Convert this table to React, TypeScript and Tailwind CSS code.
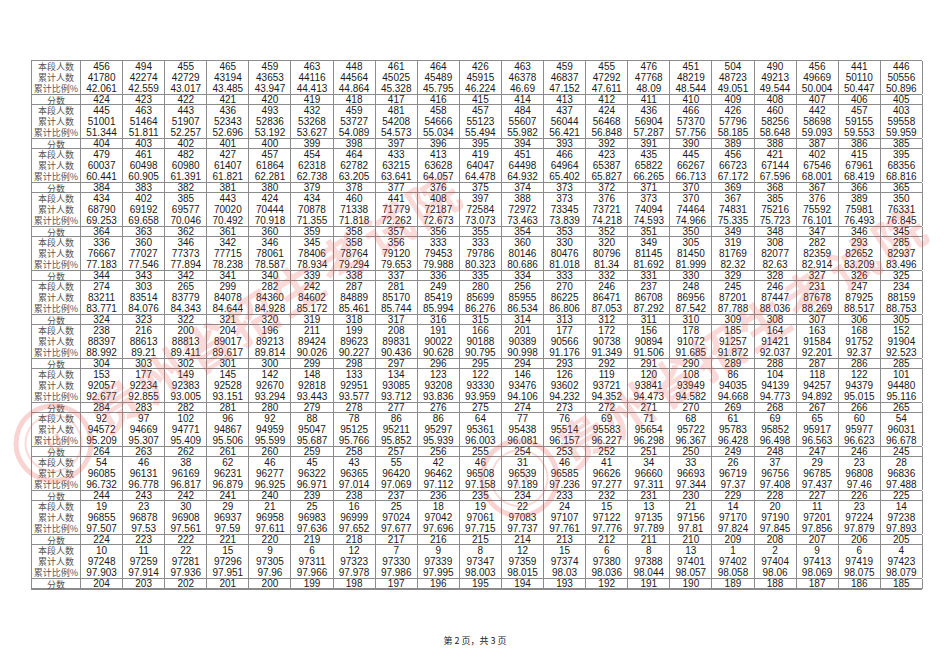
import React from 'react';

interface Group {
  counts: string;
  cums: string;
  pcts: string;
  score: number;
}

// one group = three data rows, then the score row that follows it
const groups: Group[] = [
  {
    counts: '456 494 455 465 459 463 448 461 464 426 463 459 455 476 451 504 490 456 441 446',
    cums: '41780 42274 42729 43194 43653 44116 44564 45025 45489 45915 46378 46837 47292 47768 48219 48723 49213 49669 50110 50556',
    pcts: '42.061 42.559 43.017 43.485 43.947 44.413 44.864 45.328 45.795 46.224 46.69 47.152 47.611 48.09 48.544 49.051 49.544 50.004 50.447 50.896',
    score: 424,
  },
  {
    counts: '445 463 443 436 493 432 459 481 458 457 484 437 424 436 466 426 460 442 457 403',
    cums: '51001 51464 51907 52343 52836 53268 53727 54208 54666 55123 55607 56044 56468 56904 57370 57796 58256 58698 59155 59558',
    pcts: '51.344 51.811 52.257 52.696 53.192 53.627 54.089 54.573 55.034 55.494 55.982 56.421 56.848 57.287 57.756 58.185 58.648 59.093 59.553 59.959',
    score: 404,
  },
  {
    counts: '479 461 482 427 457 454 464 433 413 419 451 466 423 435 445 456 421 402 415 395',
    cums: '60037 60498 60980 61407 61864 62318 62782 63215 63628 64047 64498 64964 65387 65822 66267 66723 67144 67546 67961 68356',
    pcts: '60.441 60.905 61.391 61.821 62.281 62.738 63.205 63.641 64.057 64.478 64.932 65.402 65.827 66.265 66.713 67.172 67.596 68.001 68.419 68.816',
    score: 384,
  },
  {
    counts: '434 402 385 443 424 434 460 441 408 397 388 373 376 373 370 367 385 376 389 350',
    cums: '68790 69192 69577 70020 70444 70878 71338 71779 72187 72584 72972 73345 73721 74094 74464 74831 75216 75592 75981 76331',
    pcts: '69.253 69.658 70.046 70.492 70.918 71.355 71.818 72.262 72.673 73.073 73.463 73.839 74.218 74.593 74.966 75.335 75.723 76.101 76.493 76.845',
    score: 364,
  },
  {
    counts: '336 360 346 342 346 345 358 356 333 333 360 330 320 349 305 319 308 282 293 285',
    cums: '76667 77027 77373 77715 78061 78406 78764 79120 79453 79786 80146 80476 80796 81145 81450 81769 82077 82359 82652 82937',
    pcts: '77.183 77.546 77.894 78.238 78.587 78.934 79.294 79.653 79.988 80.323 80.686 81.018 81.34 81.692 81.999 82.32 82.63 82.914 83.209 83.496',
    score: 344,
  },
  {
    counts: '274 303 265 299 282 242 287 281 249 280 256 270 246 237 248 245 246 231 247 234',
    cums: '83211 83514 83779 84078 84360 84602 84889 85170 85419 85699 85955 86225 86471 86708 86956 87201 87447 87678 87925 88159',
    pcts: '83.771 84.076 84.343 84.644 84.928 85.172 85.461 85.744 85.994 86.276 86.534 86.806 87.053 87.292 87.542 87.788 88.036 88.269 88.517 88.753',
    score: 324,
  },
  {
    counts: '238 216 200 204 196 211 199 208 191 166 201 177 172 156 178 185 164 163 168 152',
    cums: '88397 88613 88813 89017 89213 89424 89623 89831 90022 90188 90389 90566 90738 90894 91072 91257 91421 91584 91752 91904',
    pcts: '88.992 89.21 89.411 89.617 89.814 90.026 90.227 90.436 90.628 90.795 90.998 91.176 91.349 91.506 91.685 91.872 92.037 92.201 92.37 92.523',
    score: 304,
  },
  {
    counts: '153 177 149 145 142 148 133 134 123 122 146 126 119 120 108 86 104 118 122 101',
    cums: '92057 92234 92383 92528 92670 92818 92951 93085 93208 93330 93476 93602 93721 93841 93949 94035 94139 94257 94379 94480',
    pcts: '92.677 92.855 93.005 93.151 93.294 93.443 93.577 93.712 93.836 93.959 94.106 94.232 94.352 94.473 94.582 94.668 94.773 94.892 95.015 95.116',
    score: 284,
  },
  {
    counts: '92 97 102 96 92 88 78 86 86 64 77 76 69 71 68 61 69 65 60 54',
    cums: '94572 94669 94771 94867 94959 95047 95125 95211 95297 95361 95438 95514 95583 95654 95722 95783 95852 95917 95977 96031',
    pcts: '95.209 95.307 95.409 95.506 95.599 95.687 95.766 95.852 95.939 96.003 96.081 96.157 96.227 96.298 96.367 96.428 96.498 96.563 96.623 96.678',
    score: 264,
  },
  {
    counts: '54 46 38 62 46 45 43 55 42 46 31 46 41 34 33 26 37 29 23 28',
    cums: '96085 96131 96169 96231 96277 96322 96365 96420 96462 96508 96539 96585 96626 96660 96693 96719 96756 96785 96808 96836',
    pcts: '96.732 96.778 96.817 96.879 96.925 96.971 97.014 97.069 97.112 97.158 97.189 97.236 97.277 97.311 97.344 97.37 97.408 97.437 97.46 97.488',
    score: 244,
  },
  {
    counts: '19 23 30 29 21 25 16 25 18 19 22 24 15 13 21 14 20 11 23 14',
    cums: '96855 96878 96908 96937 96958 96983 96999 97024 97042 97061 97083 97107 97122 97135 97156 97170 97190 97201 97224 97238',
    pcts: '97.507 97.53 97.561 97.59 97.611 97.636 97.652 97.677 97.696 97.715 97.737 97.761 97.776 97.789 97.81 97.824 97.845 97.856 97.879 97.893',
    score: 224,
  },
  {
    counts: '10 11 22 15 9 6 12 7 9 8 12 15 6 8 13 1 2 9 6 4',
    cums: '97248 97259 97281 97296 97305 97311 97323 97330 97339 97347 97359 97374 97380 97388 97401 97402 97404 97413 97419 97423',
    pcts: '97.903 97.914 97.936 97.951 97.96 97.966 97.978 97.986 97.995 98.003 98.015 98.03 98.036 98.044 98.057 98.058 98.06 98.069 98.075 98.079',
    score: 204,
  },
];

const cols = Array.from({ length: 20 }, (_, i) => i);

const rowCls = 'grid grid-cols-[49px_repeat(20,42.1px)] h-[11px]';
const labelCls =
  "border-r border-[#8c8c8c] flex items-center justify-center text-[9px] leading-none whitespace-nowrap text-[#555] font-['Noto_Sans_CJK_SC',sans-serif]";
const cellCls = 'border-r border-[#8c8c8c] flex items-center justify-center leading-none';

const DataRow: React.FC<{ label: string; values: string }> = ({ label, values }) => {
  const v = values.split(' ');
  return (
    <div className={rowCls}>
      <div className={labelCls}>{label}</div>
      {cols.map((i) => (
        <div key={i} className={cellCls}>
          {v[i]}
        </div>
      ))}
    </div>
  );
};

const ScoreRow: React.FC<{ start: number }> = ({ start }) => (
  <div className={`${rowCls} border-y border-[#8c8c8c]`}>
    <div className={labelCls}>分数</div>
    {cols.map((i) => (
      <div key={i} className={cellCls}>
        {start - i}
      </div>
    ))}
  </div>
);

const Watermark: React.FC<{ left: number; top: number }> = ({ left, top }) => (
  <div
    className="absolute pointer-events-none flex items-center gap-2 -rotate-[33deg] origin-left"
    style={{ left, top }}
  >
    <div className="w-[80px] h-[80px] rounded-full border-[5px] border-[rgba(232,80,80,0.26)] flex items-center justify-center">
      <div className="w-[58px] h-[58px] rounded-full border-2 border-[rgba(232,80,80,0.22)] flex items-center justify-center text-[20px] font-bold italic text-[rgba(232,80,80,0.28)] font-['Liberation_Serif',serif]">
        JJ
      </div>
    </div>
    <span className="text-[50px] font-bold tracking-[4px] text-[rgba(232,80,80,0.22)] font-['Noto_Sans_CJK_SC',sans-serif] whitespace-nowrap">
      贵州省招生考试院
    </span>
  </div>
);

export default function App() {
  return (
    <div className="relative w-[950px] h-[672px] bg-white overflow-hidden">
      <div className="pt-[60px] pl-[31px]">
        <div className="w-[891px] border-l border-y border-[#8c8c8c] text-[10px] text-[#1a1a1a] font-['Liberation_Sans',Arial,sans-serif]">
          {groups.map((g) => (
            <React.Fragment key={g.score}>
              <DataRow label="本段人数" values={g.counts} />
              <DataRow label="累计人数" values={g.cums} />
              <DataRow label="累计比例%" values={g.pcts} />
              <ScoreRow start={g.score} />
            </React.Fragment>
          ))}
        </div>
      </div>

      <div className="absolute left-0 right-0 top-[634px] text-center text-[9px] text-[#222] font-['Noto_Sans_CJK_SC',sans-serif]">
        第 2 页，共 3 页
      </div>

      <Watermark left={20} top={425} />
      <Watermark left={486} top={460} />
    </div>
  );
}
